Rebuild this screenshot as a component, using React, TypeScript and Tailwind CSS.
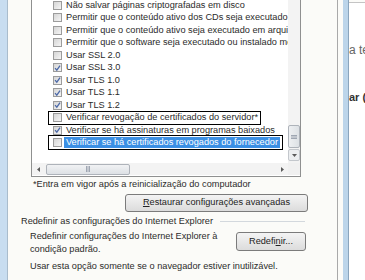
import React from "react";

type Item = { label: string; checked: boolean; mark?: "box1" | "box2" };

const items: Item[] = [
  { label: "Não salvar páginas criptografadas em disco", checked: false },
  { label: "Permitir que o conteúdo ativo dos CDs seja executado no computador", checked: false },
  { label: "Permitir que o conteúdo ativo seja executado em arquivos do Meu Computador", checked: false },
  { label: "Permitir que o software seja executado ou instalado mesmo se a assinatura for inválida", checked: false },
  { label: "Usar SSL 2.0", checked: false },
  { label: "Usar SSL 3.0", checked: true },
  { label: "Usar TLS 1.0", checked: true },
  { label: "Usar TLS 1.1", checked: true },
  { label: "Usar TLS 1.2", checked: true },
  { label: "Verificar revogação de certificados do servidor*", checked: false, mark: "box1" },
  { label: "Verificar se há assinaturas em programas baixados", checked: true },
  { label: "Verificar se há certificados revogados do fornecedor", checked: false, mark: "box2" },
];

function CheckBox({ checked }: { checked: boolean }) {
  return (
    <span className="flex h-[9px] w-[9px] shrink-0 items-center justify-center border border-[#9c9c9c] bg-gradient-to-br from-[#d5d5d5] to-[#f5f5f5]">
      {checked && (
        <svg width="8" height="8" viewBox="0 0 8 8">
          <path d="M1.2 4.2 L3.2 6.4 L6.9 1.2" fill="none" stroke="#4d6aa8" strokeWidth="1.5" />
        </svg>
      )}
    </span>
  );
}

function Arrow({ dir }: { dir: "left" | "right" | "down" }) {
  const pts = dir === "left" ? "5,1 2,3.5 5,6" : dir === "right" ? "2,1 5,3.5 2,6" : "1,2 6,2 3.5,5";
  return (
    <svg width="7" height="7" viewBox="0 0 7 7">
      <polygon points={pts} fill="#5b5b5b" />
    </svg>
  );
}

function Grip({ vertical }: { vertical?: boolean }) {
  return vertical ? (
    <svg width="6" height="6" viewBox="0 0 6 6">
      <path d="M0 1.5 H6 M0 3 H6 M0 4.5 H6" stroke="#8d96a3" strokeWidth="0.8" />
    </svg>
  ) : (
    <svg width="6" height="6" viewBox="0 0 6 6">
      <path d="M1.5 0 V6 M3 0 V6 M4.5 0 V6" stroke="#8d96a3" strokeWidth="0.8" />
    </svg>
  );
}

export default function App() {
  return (
    <div className="flex h-[280px] w-[365px] overflow-hidden bg-[#fbfbf8] font-['Liberation_Sans',Tahoma,sans-serif] text-[9.2px] text-[#2b2b2b]">
      <div className="w-[7px] shrink-0 bg-[#c8ddf0]" />
      <div className="w-px shrink-0 bg-[#a9bccc]" />

      <div className="flex w-[330px] shrink-0 flex-col border-r border-[#a9a9a9]">
        {/* list box */}
        <div className="-mt-px ml-[23px] flex h-[178px] w-[270px] flex-col border-x border-b border-[#8f9090] bg-white">
          <div className="flex min-h-0 flex-1">
            <div className="relative min-w-0 flex-1 overflow-hidden">
              {items.map((it) => (
                <div className="flex h-[12.5px] items-center pl-[21px]" key={it.label}>
                  <div className="relative flex items-center">
                    <CheckBox checked={it.checked} />
                    {it.mark === "box2" ? (
                      <span className="ml-[2px] whitespace-nowrap bg-[#3b8fe4] px-[2px] leading-[11px] text-white">
                        {it.label}
                      </span>
                    ) : (
                      <span className="ml-[4px] whitespace-nowrap leading-[11px]">{it.label}</span>
                    )}
                    {it.mark === "box1" && (
                      <span className="absolute -left-[5px] -right-[3px] -top-[1px] h-[14px] border border-black" />
                    )}
                    {it.mark === "box2" && (
                      <span className="absolute -left-[5px] -right-[3px] -top-[2px] h-[15px] border border-black" />
                    )}
                  </div>
                </div>
              ))}
            </div>
            {/* vertical scrollbar */}
            <div className="flex w-[12px] shrink-0 flex-col bg-[#f3f3f3]">
              <div className="flex-1" />
              <div className="flex h-[23px] items-center justify-center rounded-[2px] border border-[#aeb3ba] bg-gradient-to-r from-[#eef0f2] to-[#dde1e5]">
                <Grip vertical />
              </div>
              <div className="mt-px flex h-[12px] items-center justify-center rounded-[2px] border border-[#c3c7cc] bg-[#eceef0]">
                <Arrow dir="down" />
              </div>
              <div className="h-[2px]" />
            </div>
          </div>
          {/* horizontal scrollbar */}
          <div className="flex h-[12px] shrink-0">
            <div className="flex flex-1 items-center bg-[#f3f3f3]">
              <div className="flex h-[12px] w-[12px] items-center justify-center">
                <Arrow dir="left" />
              </div>
              <div className="ml-[2px] flex h-[11px] w-[84px] items-center justify-center rounded-[2px] border border-[#aeb3ba] bg-gradient-to-b from-[#f1f2f4] to-[#dde1e5]">
                <Grip />
              </div>
              <div className="flex-1" />
              <div className="flex h-[12px] w-[12px] items-center justify-center">
                <Arrow dir="right" />
              </div>
            </div>
            <div className="w-[12px] bg-[#f0f0f0]" />
          </div>
          <div className="h-px" />
        </div>

        <div className="ml-[25px] mt-[2px] h-[11px] whitespace-nowrap leading-[11px]">
          *Entra em vigor após a reinicialização do computador
        </div>

        <button className="ml-[117px] mt-[4px] flex h-[18px] w-[183px] items-center justify-center rounded-[3px] border border-[#7b7b7b] bg-gradient-to-b from-[#f4f4f4] to-[#dcdcdc] text-[9.2px] text-[#222]">
          <span>
            <span className="underline">R</span>estaurar configurações avançadas
          </span>
        </button>

        <div className="mt-[4px] flex h-[11px] items-center">
          <span className="ml-[13px] whitespace-nowrap leading-[11px]">
            Redefinir as configurações do Internet Explorer
          </span>
          <span className="ml-[7px] mr-[32px] h-px flex-1 bg-[#d3d8dd]" />
        </div>

        <div className="mt-[3px] flex">
          <div className="ml-[22px] leading-[13px]">
            <div className="whitespace-nowrap">Redefinir configurações do Internet Explorer à</div>
            <div>condição padrão.</div>
          </div>
          <button className="ml-auto mr-[31px] mt-[2px] flex h-[19px] w-[70px] items-center justify-center rounded-[3px] border border-[#7b7b7b] bg-gradient-to-b from-[#f4f4f4] to-[#dcdcdc] text-[9.2px] text-[#222]">
            <span>
              Redefi<span className="underline">n</span>ir...
            </span>
          </button>
        </div>

        <div className="ml-[22px] mt-[5px] h-[11px] whitespace-nowrap leading-[11px]">
          Usar esta opção somente se o navegador estiver inutilizável.
        </div>
      </div>

      <div className="w-[5px] shrink-0" />
      <div className="w-[5px] shrink-0 bg-[#bcd5ea]" />
      <div className="w-px shrink-0 bg-[#8aa5bd]" />
      <div className="flex w-[16px] shrink-0 flex-col overflow-hidden pt-[2px]">
        <div className="flex-1 overflow-hidden border-t border-[#c4c4c4] bg-white">
          <div className="mt-[40px] h-[14px] overflow-hidden whitespace-nowrap text-[12px] leading-[14px] text-[#666]">a te</div>
          <div className="mt-[33px] h-[14px] overflow-hidden whitespace-nowrap text-[11px] font-bold leading-[14px] text-[#333]">ar (</div>
        </div>
      </div>
    </div>
  );
}
